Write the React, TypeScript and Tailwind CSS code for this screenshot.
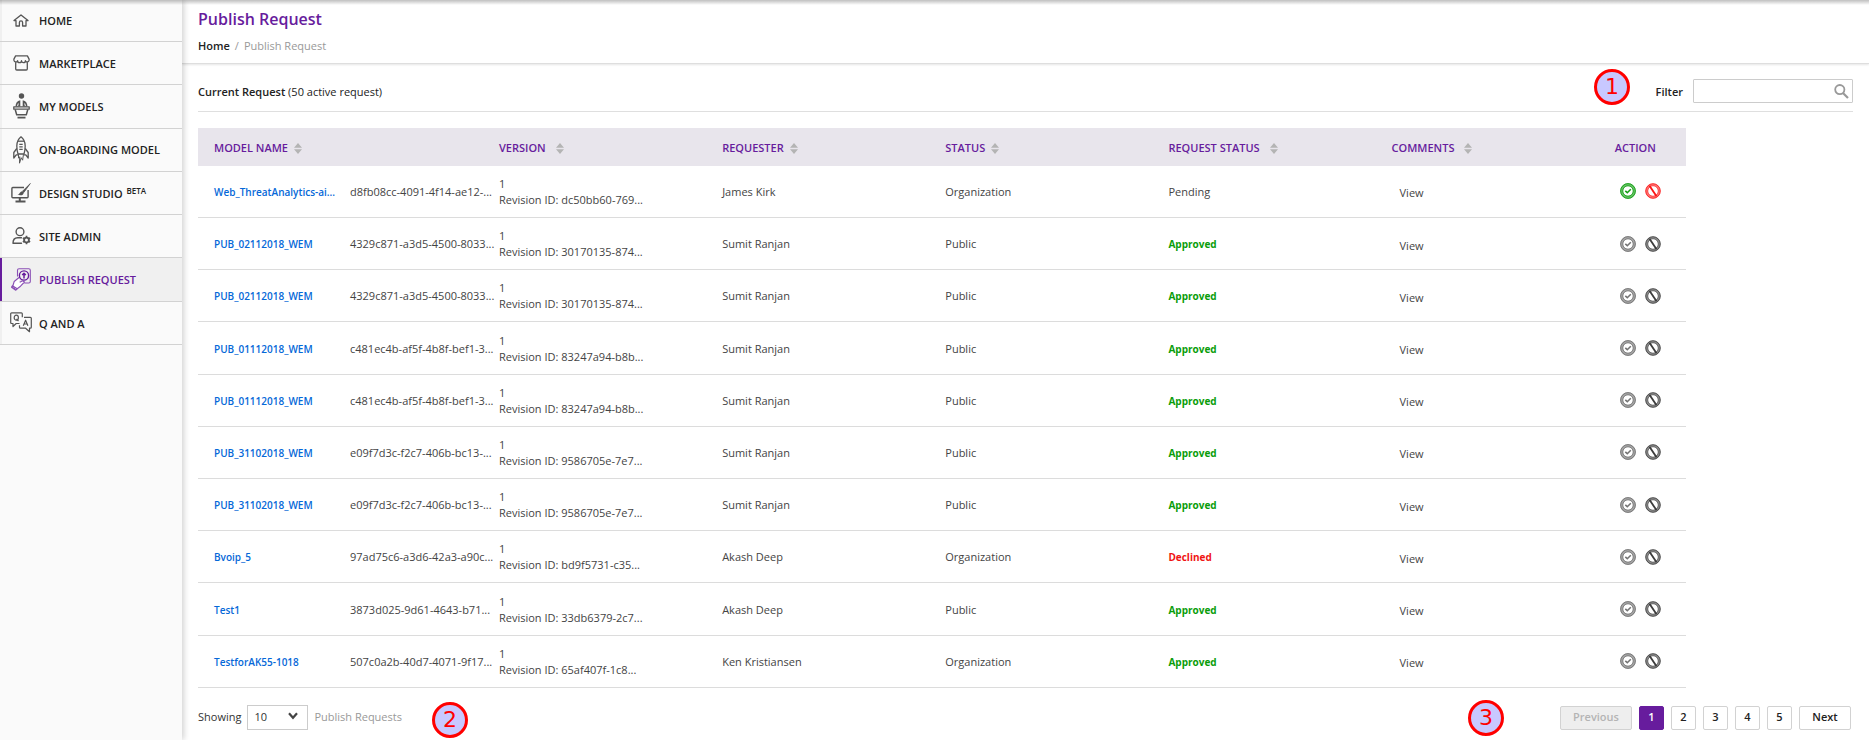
import type { ReactNode } from "react";

const ICON = "#555555";

function HomeIcon() {
  return (
    <svg width="16" height="13" viewBox="0 0 16 13" fill="none" stroke={ICON} strokeWidth="1.3" strokeLinejoin="round" strokeLinecap="round">
      <path d="M1 6.6 8 .9l7 5.7H13v5.4H9.6V8.4a1.6 1.6 0 0 0-3.2 0V12H3V6.6z" />
    </svg>
  );
}

function StoreIcon() {
  return (
    <svg width="17" height="16" viewBox="0 0 17 16" fill="none" stroke={ICON} strokeWidth="1.3" strokeLinejoin="round">
      <path d="M2.6.9h11.8l1.7 3.2v1.2a1.9 1.9 0 0 1-3.7.4 1.9 1.9 0 0 1-3.9 0 1.9 1.9 0 0 1-3.9 0A1.9 1.9 0 0 1 .9 5.3V4.1z" />
      <path d="M2.7 7.2v6.7q0 1.1 1.1 1.1h9.4q1.1 0 1.1-1.1V7.2" />
    </svg>
  );
}

function ModelsIcon() {
  return (
    <svg width="17" height="26" viewBox="0 0 17 26" fill="none" stroke={ICON} strokeWidth="1.3" strokeLinejoin="round">
      <circle cx="8.5" cy="3" r="2.7" fill={ICON} stroke="none" />
      <path d="M2.5 13.5c.2-3.5 1.5-5.7 4.8-6.3v6.3zM14.5 13.5c-.2-3.5-1.5-5.7-4.8-6.3v6.3z" fill={ICON} stroke="none" />
      <path d="M4.6 13 5.3 10.500M12.400 13 11.700 10.500" stroke="#fafafa" strokeWidth="1" />
      <path d="M.8 13.800h15.400v2.400H.8z" />
      <path d="M2.200 16.500 3.700 21.800h9.600l1.500-5.300" strokeWidth="1.5" />
      <path d="M4.500 24.600h8" strokeWidth="1.8" />
    </svg>
  );
}

function RocketIcon() {
  return (
    <svg width="16" height="28" viewBox="0 0 16 28" fill="none" stroke={ICON} strokeWidth="1.3" strokeLinejoin="round">
      <path d="M8 .8C5 3.2 3.8 6.5 3.8 10c0 3 .4 5.500 1.200 8h6c.8-2.500 1.200-5 1.200-8 0-3.500-1.200-6.800-4.200-9.200z" />
      <path d="M5 5.200h6" />
      <path d="M6.300 8.300h3.400M6.300 10.800h3.400M6.300 13.300h3.400" />
      <path d="M3.800 12.500.8 16.500V22l2.400-3.200H5M12.200 12.500l3 4V22l-2.400-3.200H11" />
      <path d="M5.500 18.200v4l1.200-1.500-.2 6.500 1.700-5.500 1.400 2.500.9-6" strokeWidth="1" />
    </svg>
  );
}

function DesignIcon() {
  return (
    <svg width="20" height="20" viewBox="0 0 20 20" fill="none" stroke={ICON} strokeWidth="1.4" strokeLinejoin="round">
      <path d="M13 4.500H1.800q-.9 0-.9.900v8.400q0 .9.900.9h14.400q.9 0 .9-.9V7" />
      <path d="M8.800 14.800v3M4.500 18.500h10" strokeWidth="2" />
      <path d="M19.300.5 11.500 8.300l1.300 1.200z" fill={ICON} strokeWidth=".8" />
      <path d="M11.400 8.500c1.500.6 1.700 1.900.6 2.900-1.300 1.200-3.800 1-5.600.2 1.600-.2 1.800-.7 2.300-1.600.6-1.100 1.500-1.700 2.700-1.500z" fill={ICON} stroke="none" />
    </svg>
  );
}

function AdminIcon() {
  return (
    <svg width="19" height="18" viewBox="0 0 19 18" fill="none" stroke={ICON} strokeWidth="1.4" strokeLinejoin="round">
      <circle cx="8" cy="4.700" r="3.900" />
      <path d="M9.500 16.200H1c0-3.600 2-5.500 4.700-5.500h3.800" strokeLinecap="round" />
      <circle cx="14.500" cy="13" r="2.400" strokeWidth="1.8" />
      <path d="M14.500 8.800v1.800M14.500 15.400v1.800M10.900 10.900l1.500.9M16.600 14.200l1.500.9M10.900 15.100l1.500-.9M16.600 11.800l1.500-.9" strokeWidth="1.7" />
    </svg>
  );
}

function PublishIcon() {
  return (
    <svg width="20" height="23" viewBox="0 0 20 23" fill="none" stroke="#8a4fb5" strokeWidth="1.1" strokeLinejoin="round">
      <path d="M6.500 8.500V2.300Q6.500.8 8 .8h9.800q1.500 0 1.500 1.500v11.200q0 1.500-1.500 1.500h-4.500" />
      <circle cx="13" cy="7.500" r="4.600" stroke="#671c9d" strokeWidth="1.4" />
      <path d="M13 10.500V5.500M11.200 7.100 13 5.200l1.800 1.900" stroke="#671c9d" strokeWidth="1.5" />
      <path d="M8 9.500 3.200 13.500 1.800 18l4.400 2.700 3.300-2.500 4-4.200-1.800-1.300-3 1.500" fill="#fff" />
      <path d="M1.800 17.300.6 19.200l4.200 2.900 1.500-1.500M1.700 19.500l1.100-1.200M3.200 20.800l1.100-1.400" strokeWidth="1.3" />
    </svg>
  );
}

function QandAIcon() {
  return (
    <svg width="22" height="21" viewBox="0 0 22 21" fill="none" stroke={ICON} strokeWidth="1.2" strokeLinejoin="round">
      <path d="M9.500 11.500H6.200L3 14.500v-3H1.700Q.7 11.500.7 10.500v-8.700q0-1 1-1h9.600q1 0 1 1v3.400" />
      <path d="M14 5.300h6.300q1 0 1 1v8.900q0 1-1 1H19.500v3.500L15.600 16.200H10.500q-1 0-1-1v-2" />
      <ellipse cx="6.300" cy="5.700" rx="2.100" ry="2.500" />
      <path d="M6.500 7 8.500 9" />
      <path d="M13.300 13.800l2.300-5.600 2.300 5.600M14.100 12h3" />
    </svg>
  );
}

type NavItem = { label: string; icon: ReactNode; beta?: boolean; active?: boolean };

const NAV: NavItem[] = [
  { label: "HOME", icon: <HomeIcon /> },
  { label: "MARKETPLACE", icon: <StoreIcon /> },
  { label: "MY MODELS", icon: <ModelsIcon /> },
  { label: "ON-BOARDING MODEL", icon: <RocketIcon /> },
  { label: "DESIGN STUDIO", icon: <DesignIcon />, beta: true },
  { label: "SITE ADMIN", icon: <AdminIcon /> },
  { label: "PUBLISH REQUEST", icon: <PublishIcon />, active: true },
  { label: "Q AND A", icon: <QandAIcon /> },
];

function Sidebar() {
  return (
    <nav className="relative z-10 w-[182px] shrink-0 bg-[#fafafa] shadow-[2px_0_6px_rgba(0,0,0,0.18)]">
      <ul className="flex h-[345px] flex-col">
        {NAV.map((n, i) => (
          <li
            key={n.label}
            className={`border-b border-[#d2d2d2] ${i === 0 ? "h-[42px] shrink-0" : "flex-1"}`}
          >
            <a
              href="#"
              className={`flex h-full items-center border-l-2 text-[11px] font-semibold ${
                n.active ? "border-[#671c9d] bg-[#f0f0f0] text-[#671c9d]" : "border-[#f0f0f0] text-[#222]"
              }`}
            >
              <span className="ml-2 flex w-[22px] justify-center">{n.icon}</span>
              <span className="ml-[7px] pt-[2px] whitespace-nowrap">
                {n.label}
                {n.beta && <sup className="ml-1 text-[8px] font-semibold">BETA</sup>}
              </span>
            </a>
          </li>
        ))}
      </ul>
    </nav>
  );
}

function SortIcon() {
  return (
    <svg width="8" height="11" viewBox="0 0 8 11" fill="#b4b4b4">
      <path d="M4 0 8 4.700H0zM4 11 0 6.300h8z" />
    </svg>
  );
}

function ApproveIcon({ on }: { on: boolean }) {
  const c = on ? "#14a014" : "#747474";
  return (
    <svg width="16" height="16" viewBox="0 0 16 16" fill="none" stroke={c}>
      <circle cx="8" cy="8" r="6.400" strokeWidth="2.600" opacity=".65" />
      <circle cx="8" cy="8" r="7.400" strokeWidth=".9" />
      <circle cx="8" cy="8" r="5.200" strokeWidth=".8" />
      <path d="M5.300 7.900 7.300 9.700 10.800 6.300" strokeWidth="1.600" />
    </svg>
  );
}

function DeclineIcon({ on }: { on: boolean }) {
  const c = on ? "#fb1414" : "#3c3c3c";
  return (
    <svg width="16" height="16" viewBox="0 0 16 16" fill="none" stroke={c}>
      <circle cx="8" cy="8" r="6.300" strokeWidth="2.500" opacity=".6" />
      <circle cx="8" cy="8" r="7.300" strokeWidth=".8" />
      <circle cx="8" cy="8" r="5.200" strokeWidth=".6" opacity=".8" />
      <path d="M4.500 2.800 11.500 13.200" strokeWidth="1.800" />
    </svg>
  );
}

const ROWS = [
  ["Web_ThreatAnalytics-ai...", "d8fb08cc-4091-4f14-ae12-...", "dc50bb60-769...", "James Kirk", "Organization", "Pending"],
  ["PUB_02112018_WEM", "4329c871-a3d5-4500-8033...", "30170135-874...", "Sumit Ranjan", "Public", "Approved"],
  ["PUB_02112018_WEM", "4329c871-a3d5-4500-8033...", "30170135-874...", "Sumit Ranjan", "Public", "Approved"],
  ["PUB_01112018_WEM", "c481ec4b-af5f-4b8f-bef1-3...", "83247a94-b8b...", "Sumit Ranjan", "Public", "Approved"],
  ["PUB_01112018_WEM", "c481ec4b-af5f-4b8f-bef1-3...", "83247a94-b8b...", "Sumit Ranjan", "Public", "Approved"],
  ["PUB_31102018_WEM", "e09f7d3c-f2c7-406b-bc13-...", "9586705e-7e7...", "Sumit Ranjan", "Public", "Approved"],
  ["PUB_31102018_WEM", "e09f7d3c-f2c7-406b-bc13-...", "9586705e-7e7...", "Sumit Ranjan", "Public", "Approved"],
  ["Bvoip_5", "97ad75c6-a3d6-42a3-a90c...", "bd9f5731-c35...", "Akash Deep", "Organization", "Declined"],
  ["Test1", "3873d025-9d61-4643-b71...", "33db6379-2c7...", "Akash Deep", "Public", "Approved"],
  ["TestforAK55-1018", "507c0a2b-40d7-4071-9f17...", "65af407f-1c8...", "Ken Kristiansen", "Organization", "Approved"],
];

const STATUS_CLASS: Record<string, string> = {
  Pending: "",
  Approved: "text-[10px] font-bold text-[#0a9d0a]",
  Declined: "text-[10px] font-bold text-[#f01414]",
};

const HEADS: { label: string; span?: number; gap: string; sort: boolean }[] = [
  { label: "MODEL NAME", span: 2, gap: "gap-[6px]", sort: true },
  { label: "VERSION", gap: "gap-[10px]", sort: true },
  { label: "REQUESTER", gap: "gap-[6px]", sort: true },
  { label: "STATUS", gap: "gap-[6px]", sort: true },
  { label: "REQUEST STATUS", gap: "gap-[10px]", sort: true },
  { label: "COMMENTS", gap: "gap-[10px]", sort: true },
  { label: "ACTION", gap: "", sort: false },
];

function RequestTable() {
  return (
    <table className="mt-4 h-[560px] w-[90%] table-fixed border-collapse text-left text-[11px] leading-4 text-[#444]">
      <colgroup>
        <col className="w-[136px]" />
        <col className="w-[149px]" />
        <col className="w-[15%]" />
        <col className="w-[15%]" />
        <col className="w-[15%]" />
        <col className="w-[15%]" />
        <col className="w-[15%]" />
        <col />
      </colgroup>
      <thead>
        <tr className="h-[38px] bg-[#e8e5ec] text-[#671c9d]">
          {HEADS.map((h) => (
            <th key={h.label} colSpan={h.span} className="pt-[2px] pb-0 pl-4 font-semibold whitespace-nowrap">
              {h.sort ? (
                <button type="button" className={`flex items-center ${h.gap}`}>
                  {h.label}
                  <SortIcon />
                </button>
              ) : (
                h.label
              )}
            </th>
          ))}
        </tr>
      </thead>
      <tbody>
        {ROWS.map(([name, id, rev, who, status, req], i) => (
          <tr key={i} className="border-b border-[#dcdcdc] whitespace-nowrap">
            <td className="pt-px pl-4 text-[10px]">
              <a href="#" className="font-semibold text-[#0568d8]">{name}</a>
            </td>
            <td className="pt-px pl-4">{id}</td>
            <td className="pt-px pl-4">
              <div>1</div>
              <div>Revision ID: {rev}</div>
            </td>
            <td className="pt-px pl-4">{who}</td>
            <td className="pt-px pl-4">{status}</td>
            <td className={`pt-px pl-4 ${STATUS_CLASS[req]}`}>{req}</td>
            <td className="pt-1 pl-6">
              <button type="button">View</button>
            </td>
            <td className="pl-[21px]">
              <div className="flex items-center gap-[9px]">
                <button type="button" aria-label="Approve"><ApproveIcon on={req === "Pending"} /></button>
                <button type="button" aria-label="Decline"><DeclineIcon on={req === "Pending"} /></button>
              </div>
            </td>
          </tr>
        ))}
      </tbody>
    </table>
  );
}

function Marker({ n, place }: { n: number; place: string }) {
  return (
    <span
      className={`absolute flex size-9 items-center justify-center rounded-full border-3 border-[#f00] bg-[#c8c8ff] font-['DejaVu_Sans',sans-serif] text-[22px] leading-none text-[#f00] ${place}`}
    >
      {n}
    </span>
  );
}

function Footer() {
  return (
    <div className="relative mt-[17px] flex items-center justify-between text-[11px]">
      <div className="flex items-center text-[#333]">
        <label htmlFor="page-size">Showing</label>
        <div className="relative ml-[6px]">
          <select
            id="page-size"
            defaultValue="10"
            className="block h-[25px] w-[61px] appearance-none border border-[#ccc] bg-white pl-[6px] text-[11px] text-[#333]"
          >
            <option>10</option>
            <option>20</option>
            <option>50</option>
          </select>
          <svg className="pointer-events-none absolute top-[7px] right-[10px]" width="10" height="8" viewBox="0 0 10 8" fill="none" stroke="#444" strokeWidth="2.200">
            <path d="M1 1.300 5 5.800 9 1.300" />
          </svg>
        </div>
        <span className="ml-[6px] text-[#999]">Publish Requests</span>
      </div>
      <div className="flex gap-[7px] font-semibold text-[#222]">
        <button type="button" disabled className="h-6 w-[72px] rounded-[2px] border border-[#d2d2d2] bg-[#eee] text-[#b4b4b4]">
          Previous
        </button>
        {[1, 2, 3, 4, 5].map((p) => (
          <button
            key={p}
            type="button"
            className={`h-6 w-[25px] rounded-[2px] border ${
              p === 1 ? "border-[#671c9d] bg-[#671c9d] text-white" : "border-[#d2d2d2] bg-white"
            }`}
          >
            {p}
          </button>
        ))}
        <button type="button" className="h-6 w-[52px] rounded-[2px] border border-[#d2d2d2] bg-white">
          Next
        </button>
      </div>
      <Marker n={2} place="left-[234px] top-[-3px]" />
      <Marker n={3} place="right-[347px] top-[-5px]" />
    </div>
  );
}

export default function App() {
  return (
    <div className="relative flex min-h-screen bg-white font-['Open_Sans','Noto_Sans',sans-serif] text-[#222]">
      <div className="absolute inset-x-0 top-0 z-20 h-[5px] bg-linear-to-b from-black/25 to-transparent" />
      <Sidebar />
      <main className="min-w-0 flex-1">
        <header className="border-b border-[#dedede] pt-[7px] pb-[9px] pl-4 shadow-[0_1px_2px_rgba(0,0,0,0.1)]">
          <h1 className="text-[16px] leading-6 font-semibold text-[#671c9d]">Publish Request</h1>
          <div className="mt-[7px] flex gap-[5px] text-[11px] leading-4 text-[#999]">
            <a href="#" className="font-semibold text-[#222]">Home</a>
            <span>/</span>
            <span>Publish Request</span>
          </div>
        </header>
        <div className="px-4">
          <div className="relative flex items-center justify-between border-b border-[#dfdfdf] pt-[15px] pb-2 text-[11px]">
            <p className="pt-[2px]">
              <strong className="font-semibold">Current Request</strong> (50 active request)
            </p>
            <div className="flex items-center">
              <label htmlFor="filter" className="mr-[10px] pt-[2px] font-semibold">Filter</label>
              <div className="relative">
                <input id="filter" type="text" className="block h-6 w-40 rounded-[1px] border border-[#ccc] bg-white px-1 pr-6" />
                <svg className="pointer-events-none absolute top-[5px] right-1" width="15" height="15" viewBox="0 0 15 15" fill="none" stroke="#999" strokeWidth="1.800">
                  <circle cx="5.800" cy="5.600" r="4.600" />
                  <path d="M9 9 14 14" strokeWidth="2.200" />
                </svg>
              </div>
            </div>
            <Marker n={1} place="right-[223px] top-[5px]" />
          </div>
          <div className="pr-[2px]">
            <RequestTable />
            <Footer />
          </div>
        </div>
      </main>
    </div>
  );
}
